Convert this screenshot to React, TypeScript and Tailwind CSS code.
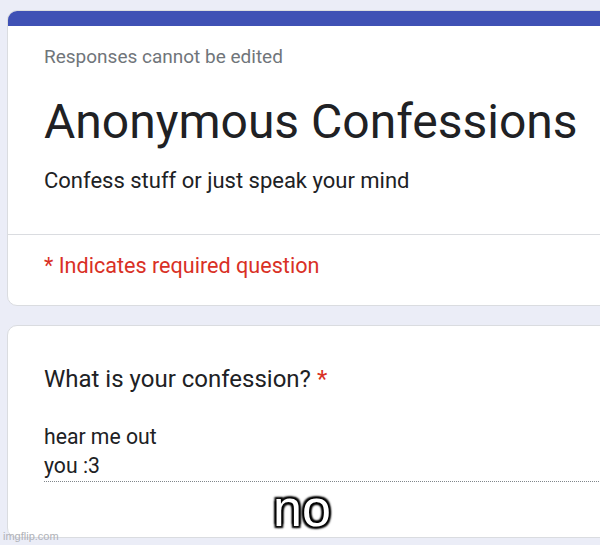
export default function App() {
  const font = { fontFamily: 'Roboto, "Noto Sans", sans-serif' }
  return (
    <div className="relative w-[600px] h-[545px] overflow-hidden bg-[#ebedf7]" style={font}>
      <div className="pt-[10px] pl-[7px] flex flex-col gap-[19px] w-[660px]">
        {/* header card */}
        <div className="rounded-[10px] bg-white border border-[#dadce0] overflow-hidden">
          <div className="h-[15px] bg-[#3f51b5]" />
          <div className="pl-[36px] pt-[19px] pb-[39px]">
            <p className="text-[19px] leading-[24px] text-[#70757a]">Responses cannot be edited</p>
            <h1 className="mt-[25px] text-[48px] leading-[56px] text-[#202124]">Anonymous Confessions</h1>
            <p className="mt-[17px] text-[22px] leading-[28px] text-[#202124]">Confess stuff or just speak your mind</p>
          </div>
          <div className="border-t border-[#dadce0] pl-[36px] pt-[17px] pb-[25px]">
            <p className="text-[21.6px] leading-[28px] text-[#d93025]">* Indicates required question</p>
          </div>
        </div>

        {/* question card */}
        <div className="rounded-[10px] bg-white border border-[#dadce0] h-[213px] pl-[36px] pt-[38px]">
          <p className="text-[24px] leading-[30px] text-[#202124]">
            What is your confession? <span className="text-[#d93025]">*</span>
          </p>
          <div className="mt-[28px] text-[21.2px] leading-[29px] text-[#202124]">
            <p>hear me out</p>
            <p>you :3</p>
          </div>
          <div className="mt-[1px] border-b border-dotted border-[#80868b]" />
        </div>
      </div>

      {/* meme caption */}
      <div
        className="absolute left-[273px] top-[480px] text-[52px] leading-[56px] text-white"
        style={{
          fontFamily: '"Liberation Sans", Arial, sans-serif',
          textShadow:
            '0 0 3px #000, 0 0 3px #000, 2px 2px 2px #000, -2px -2px 2px #000, 2px -2px 2px #000, -2px 2px 2px #000',
        }}
      >
        no
      </div>

      <div
        className="absolute left-[3px] top-[529px] text-[11px] leading-[14px] text-[#b0b2b8]"
        style={{ fontFamily: '"Liberation Sans", Arial, sans-serif' }}
      >
        imgflip.com
      </div>
    </div>
  )
}
